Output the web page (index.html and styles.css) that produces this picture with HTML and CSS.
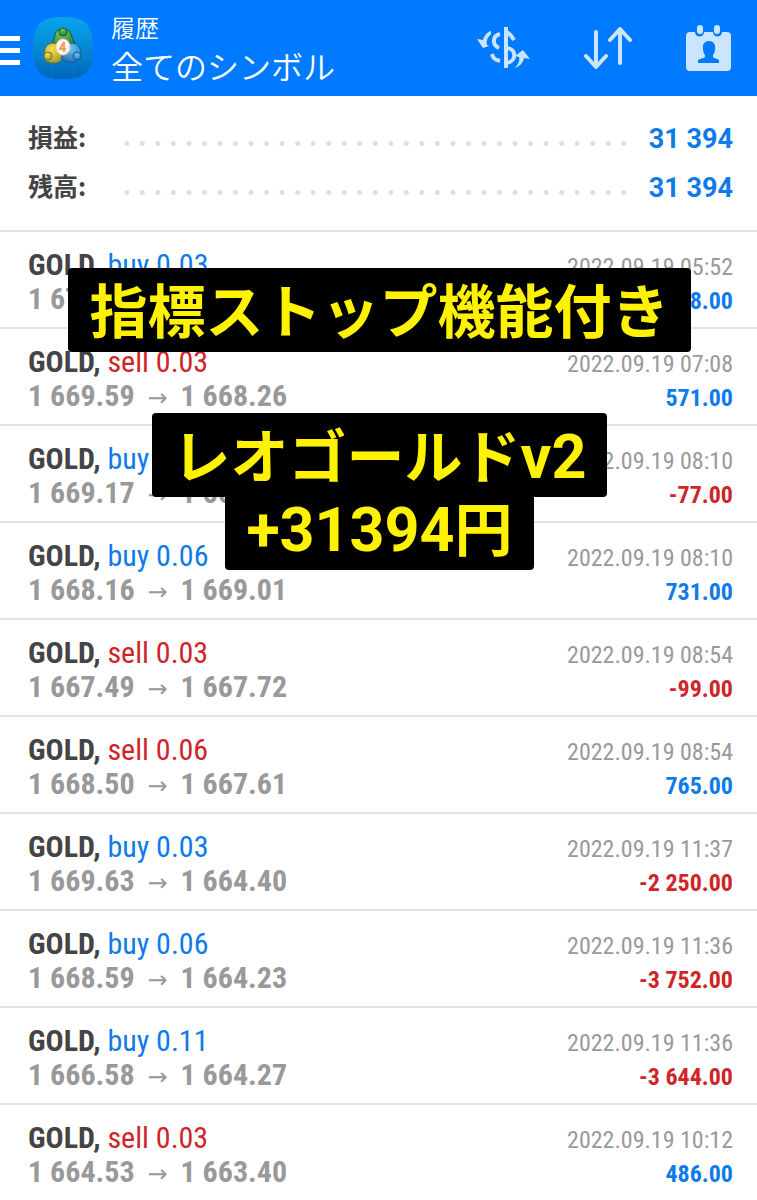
FILE: index.html
```
<!DOCTYPE html>
<html lang="ja">
<head>
<meta charset="utf-8">
<meta name="viewport" content="width=device-width, initial-scale=1">
<title>履歴</title>
<link rel="stylesheet" href="styles.css">
</head>
<body>
<header class="topbar">
  <button class="menu" aria-label="メニュー"><span></span><span></span><span></span></button>
  <svg class="logo" viewBox="0 0 62 64" aria-hidden="true">
    <defs>
      <linearGradient id="tile" x1="0" y1="0" x2="0" y2="1"><stop offset="0" stop-color="#08a4ec"/><stop offset=".5" stop-color="#0489d4"/><stop offset="1" stop-color="#0264ba"/></linearGradient>
      <radialGradient id="green" cx=".4" cy=".2" r=".8"><stop offset="0" stop-color="#7ccb5b"/><stop offset="1" stop-color="#1c7a3a"/></radialGradient>
      <radialGradient id="gold" cx=".4" cy=".3" r=".8"><stop offset="0" stop-color="#f4e04c"/><stop offset="1" stop-color="#a5922a"/></radialGradient>
      <radialGradient id="sky" cx=".5" cy=".3" r=".8"><stop offset="0" stop-color="#6cc6f2"/><stop offset="1" stop-color="#1766ae"/></radialGradient>
    </defs>
    <path d="M31 1C53 1 61 8 61 32S53 63 31 63 1 56 1 32 9 1 31 1Z" fill="url(#tile)"/>
    <path d="M2 20H60M2 42H60M20 2V62M42 2V62" stroke="#1a9be0" stroke-width="1" opacity=".25"/>
    <path d="M24 16c2-4 12-4 14 0l5 12c-3 6-21 6-23 0Z" fill="url(#green)" stroke="#185a3b"/>
    <path d="M14 31c3-5 11-5 14-1l3 12c-3 6-12 6-17 3-3-3-2-10 0-14Z" fill="url(#gold)" stroke="#6c7430"/>
    <path d="M36 28c6-3 12 1 13 8 1 9-9 14-20 7Z" fill="url(#sky)" stroke="#175c98"/>
    <circle cx="31" cy="16" r="4" fill="url(#green)" stroke="#185a3b"/>
    <circle cx="16" cy="40" r="4" fill="url(#gold)" stroke="#6c7430"/>
    <circle cx="45" cy="40" r="4" fill="url(#sky)" stroke="#175c98"/>
    <ellipse cx="31" cy="31" rx="7" ry="8" fill="#fff5eb" stroke="#d9d4c4"/>
    <path d="M32 26l-4 7h6m-2-7v10" fill="none" stroke="#eea064" stroke-width="2"/>
  </svg>
  <div class="heading">
    <p class="section">履歴</p>
    <h1 class="title">全てのシンボル</h1>
  </div>
  <div class="actions">
    <button aria-label="シンボル"><svg viewBox="0 0 54 44" width="54" height="44">
      <g fill="none" stroke="#cce5ff" stroke-width="4"><path d="M23 8c-8 2-8 11-1 14M15 28c1 5 4 6 8 7M29 1v41M29 6c3 1 5 3 8 8M29 22c11 0 11 14 0 15"/></g>
      <path d="M14 5v3c-4 4-5 7-4 11l2 1-6 2-6-9 6 1c1-4 4-8 8-9ZM46 24l7 9-6-1c-1 5-4 8-9 10 4-5 5-8 4-11l-4-1Z" fill="#cce5ff"/>
    </svg></button>
    <button aria-label="並べ替え"><svg viewBox="0 0 50 44" width="50" height="44" fill="none" stroke="#cce5ff" stroke-width="4" stroke-linecap="round" stroke-linejoin="round"><path d="M13 6v35M3 30l10 11 10-11M37 37V3M27 14L37 3l10 11"/></svg></button>
    <button aria-label="期間"><svg viewBox="0 0 48 48" width="48" height="48">
      <path d="M5 8h5c0 6 9 6 9 0h9c0 6 9 6 9 0h5q4 0 4 4v31q0 4-4 4H5q-4 0-4-4V12q0-4 4-4Z" fill="#cce5ff"/>
      <rect x="12" y="1" width="6" height="9" rx="3" fill="#cce5ff"/><rect x="29" y="1" width="6" height="9" rx="3" fill="#cce5ff"/>
      <path d="M24 17c4 0 7 3 6 8 0 3-1 5-2 6v2c1 2 6 1 6 4v2H13v-2c0-3 6-2 7-4v-2c-1-1-2-3-2-6-1-5 2-8 6-8Z" fill="#007aff"/>
    </svg></button>
  </div>
</header>
<main>
  <dl class="summary">
    <div class="total"><dt>損益:</dt><dd>31 394</dd></div>
    <div class="total"><dt>残高:</dt><dd>31 394</dd></div>
  </dl>
  <ul class="trades">
    <li class="trade"><p class="deal"><b>GOLD,</b> <span class="up">buy 0.03</span></p><time>2022.09.19 05:52</time><p class="price">1 671.52 <i>→</i> 1 672.84</p><p class="amount up">568.00</p></li>
    <li class="trade"><p class="deal"><b>GOLD,</b> <span class="down">sell 0.03</span></p><time>2022.09.19 07:08</time><p class="price">1 669.59 <i>→</i> 1 668.26</p><p class="amount up">571.00</p></li>
    <li class="trade"><p class="deal"><b>GOLD,</b> <span class="up">buy 0.03</span></p><time>2022.09.19 08:10</time><p class="price">1 669.17 <i>→</i> 1 668.99</p><p class="amount down">-77.00</p></li>
    <li class="trade"><p class="deal"><b>GOLD,</b> <span class="up">buy 0.06</span></p><time>2022.09.19 08:10</time><p class="price">1 668.16 <i>→</i> 1 669.01</p><p class="amount up">731.00</p></li>
    <li class="trade"><p class="deal"><b>GOLD,</b> <span class="down">sell 0.03</span></p><time>2022.09.19 08:54</time><p class="price">1 667.49 <i>→</i> 1 667.72</p><p class="amount down">-99.00</p></li>
    <li class="trade"><p class="deal"><b>GOLD,</b> <span class="down">sell 0.06</span></p><time>2022.09.19 08:54</time><p class="price">1 668.50 <i>→</i> 1 667.61</p><p class="amount up">765.00</p></li>
    <li class="trade"><p class="deal"><b>GOLD,</b> <span class="up">buy 0.03</span></p><time>2022.09.19 11:37</time><p class="price">1 669.63 <i>→</i> 1 664.40</p><p class="amount down">-2 250.00</p></li>
    <li class="trade"><p class="deal"><b>GOLD,</b> <span class="up">buy 0.06</span></p><time>2022.09.19 11:36</time><p class="price">1 668.59 <i>→</i> 1 664.23</p><p class="amount down">-3 752.00</p></li>
    <li class="trade"><p class="deal"><b>GOLD,</b> <span class="up">buy 0.11</span></p><time>2022.09.19 11:36</time><p class="price">1 666.58 <i>→</i> 1 664.27</p><p class="amount down">-3 644.00</p></li>
    <li class="trade"><p class="deal"><b>GOLD,</b> <span class="down">sell 0.03</span></p><time>2022.09.19 10:12</time><p class="price">1 664.53 <i>→</i> 1 663.40</p><p class="amount up">486.00</p></li>
  </ul>
</main>
<div class="captions">
  <p class="caption lead">指標ストップ機能付き</p>
  <p class="caption">レオゴールド<span>v2</span></p>
  <p class="caption joined"><span>+31394</span>円</p>
</div>
</body>
</html>
```
FILE: styles.css
```
* { box-sizing: border-box; margin: 0; padding: 0; }
html { height: 100%; overflow: hidden; }
body {
  position: relative;
  height: 100%;
  overflow: hidden;
  background: #fff;
  color: #444;
  font-family: Roboto, "Noto Sans CJK JP", sans-serif;
}
button { border: 0; background: none; display: flex; }
.topbar {
  display: flex;
  align-items: center;
  height: 96px;
  padding-right: 24px;
  background: #007aff;
  color: #fff;
}
.menu { width: 20px; flex-direction: column; gap: 7px; margin: 4px 12px 0 0; }
.menu span { width: 100%; height: 5px; background: #fff; }
.logo { width: 62px; height: 64px; }
.heading { flex: 1; padding-left: 17px; font-family: "Noto Sans CJK JP", sans-serif; }
.section { font-size: 24px; line-height: 34px; font-weight: 350; }
.title { font-size: 32px; line-height: 42px; font-weight: 350; }
.actions { display: flex; align-items: center; gap: 52px; }

.summary { padding: 18px 24px 18px 28px; border-bottom: 2px solid #e4e4e4; }
.total { display: flex; align-items: center; justify-content: space-between; height: 49px; font-weight: 700; }
.total dt { font-size: 25px; line-height: 33px; padding-bottom: 4px; font-family: "Noto Sans CJK JP", sans-serif; }
.total dd { font-size: 27px; color: #0f7bea; display: flex; flex: 1; align-items: center; }
.total dd::before {
  content: "";
  flex: 1;
  height: 5px;
  margin: 9px 17px 0 33px;
  background: radial-gradient(circle, #dedede 2px, transparent 3px) 0 0 / calc(100% / 33) 5px;
}

.trades { list-style: none; }
.trade {
  display: grid;
  grid-template-columns: 1fr auto;
  grid-auto-rows: 34px;
  align-items: baseline;
  height: 97px;
  padding: 16px 24px 0 28px;
  border-bottom: 2px solid #e4e4e4;
  font-family: "Roboto Condensed", "Liberation Sans Narrow", Roboto, sans-serif;
  line-height: 34px;
  white-space: nowrap;
}
.deal { font-size: 30px; }
.trade time { font-size: 24px; color: #999; text-align: right; }
.price { font-size: 30px; font-weight: 700; color: #999; }
.price i { font: 400 24px "DejaVu Sans", sans-serif; margin: 0 6px; }
.amount { font-size: 24px; font-weight: 700; text-align: right; }
.up { color: #0f7bea; }
.down { color: #cf2528; }

.captions {
  position: absolute;
  top: 268px;
  left: 0;
  right: 0;
  padding-left: 2px;
  display: flex;
  flex-direction: column;
  align-items: center;
}
.caption {
  padding: 0 21px 4px;
  border-radius: 4px;
  background: #000;
  color: #fff200;
  font: 700 58px/80px "Noto Sans CJK JP", sans-serif;
  white-space: nowrap;
}
.caption span { font-family: Roboto, sans-serif; font-size: 61px; line-height: 1; }
.lead { margin-bottom: 61px; }
.joined { margin-top: -11px; }
```
